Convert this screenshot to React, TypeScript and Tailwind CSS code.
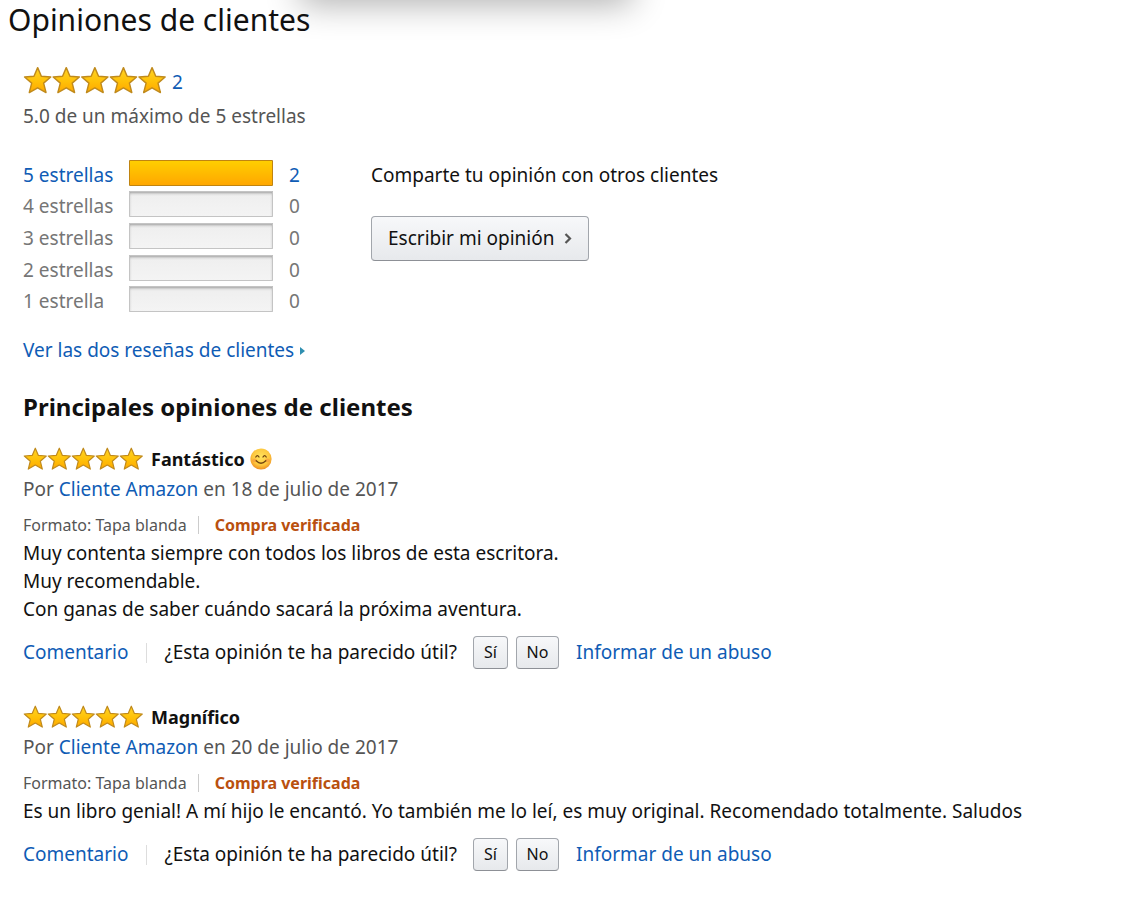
import { useId } from 'react';

type ReviewData = {
  title: string;
  emoji?: boolean;
  date: string;
  lines: string[];
};

const histogram = [
  { label: '5 estrellas', count: 2, percent: 100 },
  { label: '4 estrellas', count: 0, percent: 0 },
  { label: '3 estrellas', count: 0, percent: 0 },
  { label: '2 estrellas', count: 0, percent: 0 },
  { label: '1 estrella', count: 0, percent: 0 },
];

const reviews: ReviewData[] = [
  {
    title: 'Fantástico',
    emoji: true,
    date: '18 de julio de 2017',
    lines: [
      'Muy contenta siempre con todos los libros de esta escritora.',
      'Muy recomendable.',
      'Con ganas de saber cuándo sacará la próxima aventura.',
    ],
  },
  {
    title: 'Magnífico',
    date: '20 de julio de 2017',
    lines: [
      'Es un libro genial! A mí hijo le encantó. Yo también me lo leí, es muy original. Recomendado totalmente. Saludos',
    ],
  },
];

const linkClass = 'text-[#0f5cb5] hover:text-[#c45500] hover:underline';

const buttonClass =
  'rounded-[4px] border border-[#a2a6ac] border-b-[#8d9096] bg-linear-to-b from-[#f7f8fa] to-[#e7e9ec] text-[#111]';

function Stars({ className }: { className: string }) {
  const gradient = useId();

  return (
    <svg
      viewBox="0 0 120 24"
      className={className}
      role="img"
      aria-label="5.0 de un máximo de 5 estrellas"
    >
      <defs>
        <linearGradient id={gradient} x1="0" y1="0" x2="0" y2="1">
          <stop offset="0" stopColor="#ffd426" />
          <stop offset="0.55" stopColor="#ffc108" />
          <stop offset="1" stopColor="#ffa800" />
        </linearGradient>
      </defs>
      {[0, 24, 48, 72, 96].map((x) => (
        <path
          key={x}
          transform={`translate(${x} 0)`}
          d="M12.3 1.2 L15.4 8.4 L23.3 9 L17.3 14.2 L19.3 22.1 L12.3 18.1 L5.3 22.1 L7.3 14.2 L1.3 9 L9.2 8.4 Z"
          fill={`url(#${gradient})`}
          stroke="#c08a1c"
          strokeWidth="1.2"
          strokeLinejoin="round"
        />
      ))}
    </svg>
  );
}

function Smile() {
  const gradient = useId();

  return (
    <svg viewBox="0 0 22 22" className="h-[22px] w-[22px]" aria-hidden="true">
      <defs>
        <radialGradient id={gradient} cx="0.5" cy="0.4" r="0.6">
          <stop offset="0" stopColor="#ffe25c" />
          <stop offset="0.65" stopColor="#fdc83f" />
          <stop offset="1" stopColor="#ee8f22" />
        </radialGradient>
      </defs>
      <circle cx="11" cy="11" r="10.6" fill={`url(#${gradient})`} />
      <ellipse cx="4.6" cy="12.4" rx="2.4" ry="1.8" fill="#f58a3c" opacity="0.5" />
      <ellipse cx="17.4" cy="12.4" rx="2.4" ry="1.8" fill="#f58a3c" opacity="0.5" />
      <g fill="none" stroke="#70430f" strokeWidth="1.3" strokeLinecap="round">
        <path d="M5.8 9 Q7.4 6.4 9 9" />
        <path d="M13 9 Q14.6 6.4 16.2 9" />
        <path d="M6.2 12.8 Q11 17.6 15.8 12.8" />
      </g>
    </svg>
  );
}

function Histogram() {
  return (
    <table className="h-[158px] w-[277px] shrink-0 border-collapse leading-6">
      <tbody>
        {histogram.map(({ label, count, percent }) => {
          const color = count > 0 ? 'text-[#0f5cb5]' : 'text-[#767676]';

          return (
            <tr key={label} className={color}>
              <th
                scope="row"
                className="w-[106px] p-0 pt-1 text-left font-normal whitespace-nowrap"
              >
                {count > 0 ? (
                  <a href="#5" className={linkClass}>
                    {label}
                  </a>
                ) : (
                  label
                )}
              </th>
              <td className="w-36 p-0">
                <div className="h-[26px] rounded-[1px] bg-linear-to-b from-[#eeeeee] to-[#f4f4f4] shadow-[inset_0_0_0_1px_#c4c4c4,inset_0_2px_3px_#999999]">
                  {percent > 0 && (
                    <div
                      className="h-full rounded-[1px] border border-[#c08410] bg-linear-to-b from-[#ffce00] to-[#ffa700]"
                      style={{ width: `${percent}%` }}
                    />
                  )}
                </div>
              </td>
              <td className="p-0 pt-1 pl-4">
                {count > 0 ? (
                  <a href="#5" className={linkClass}>
                    {count}
                  </a>
                ) : (
                  count
                )}
              </td>
            </tr>
          );
        })}
      </tbody>
    </table>
  );
}

function Review({ title, emoji, date, lines }: ReviewData) {
  return (
    <article>
      <div className="flex h-7 items-center">
        <Stars className="h-6 w-[120px]" />
        <h3 className="ml-2 text-[18px] font-bold">{title}</h3>
        {emoji && (
          <span className="ml-[5px]">
            <Smile />
          </span>
        )}
      </div>
      <p className="leading-8 text-[#555]">
        Por{' '}
        <a href="#cliente" className={linkClass}>
          Cliente Amazon
        </a>{' '}
        en {date}
      </p>
      <div className="mt-1.5 flex h-7 items-center text-[16px]">
        <span className="text-[#555]">Formato: Tapa blanda</span>
        <span className="mr-4 ml-[11px] h-[18px] w-px bg-[#ccc]" />
        <a href="#verificada" className="font-bold text-[#b9500f]">
          Compra verificada
        </a>
      </div>
      <div className="leading-7">
        {lines.map((line) => (
          <p key={line}>{line}</p>
        ))}
      </div>
      <div className="mt-[13px] flex items-center">
        <a href="#comentario" className={linkClass}>
          Comentario
        </a>
        <span className="mr-[18px] ml-[17px] h-5 w-px bg-[#ddd]" />
        <span>¿Esta opinión te ha parecido útil?</span>
        <button type="button" className={`${buttonClass} ml-4 h-[33px] w-[35px] text-[16px]`}>
          Sí
        </button>
        <button type="button" className={`${buttonClass} ml-2 h-[33px] w-[43px] text-[16px]`}>
          No
        </button>
        <a href="#abuso" className={`${linkClass} ml-[17px]`}>
          Informar de un abuso
        </a>
      </div>
    </article>
  );
}

export default function App() {
  return (
    <main className="relative min-h-screen bg-white font-['Noto_Sans',sans-serif] text-[19px] leading-[29px] text-[#111]">
      <div className="pointer-events-none absolute -top-10 left-[300px] h-10 w-[332px] shadow-[0_4px_34px_rgba(0,0,0,0.32)]" />
      <h1 className="px-2 text-[30px] leading-10">Opiniones de clientes</h1>

      <div className="px-[23px] pt-[26px]">
        <div className="flex items-center">
          <Stars className="h-[29px] w-[143px]" />
          <a href="#opiniones" className={`${linkClass} ml-1.5 pt-0.5 leading-6`}>
            2
          </a>
        </div>
        <p className="mt-[7px] text-[#555]">5.0 de un máximo de 5 estrellas</p>

        <div className="mt-[26px] flex items-start gap-[71px]">
          <Histogram />
          <div className="pt-1">
            <p>Comparte tu opinión con otros clientes</p>
            <button
              type="button"
              className={`${buttonClass} mt-[26px] flex h-[45px] items-center gap-2.5 px-4`}
            >
              Escribir mi opinión
              <svg viewBox="0 0 8 12" className="h-3 w-2" aria-hidden="true">
                <path d="M1.5 1 L6 5.5 L1.5 10" fill="none" stroke="#555" strokeWidth="2.2" />
              </svg>
            </button>
          </div>
        </div>

        <a href="#todas" className={`${linkClass} mt-[21px] inline-flex items-center gap-1.5`}>
          Ver las dos reseñas de clientes
          <svg viewBox="0 0 5 8" className="h-2 w-[5px]" aria-hidden="true">
            <path d="M0 0 L5 4 L0 8 Z" fill="#2f8fb0" />
          </svg>
        </a>

        <h2 className="mt-6 text-2xl leading-9 font-bold">Principales opiniones de clientes</h2>

        <div className="mt-5 flex flex-col gap-[34px]">
          {reviews.map((review) => (
            <Review key={review.title} {...review} />
          ))}
        </div>
      </div>
    </main>
  );
}
